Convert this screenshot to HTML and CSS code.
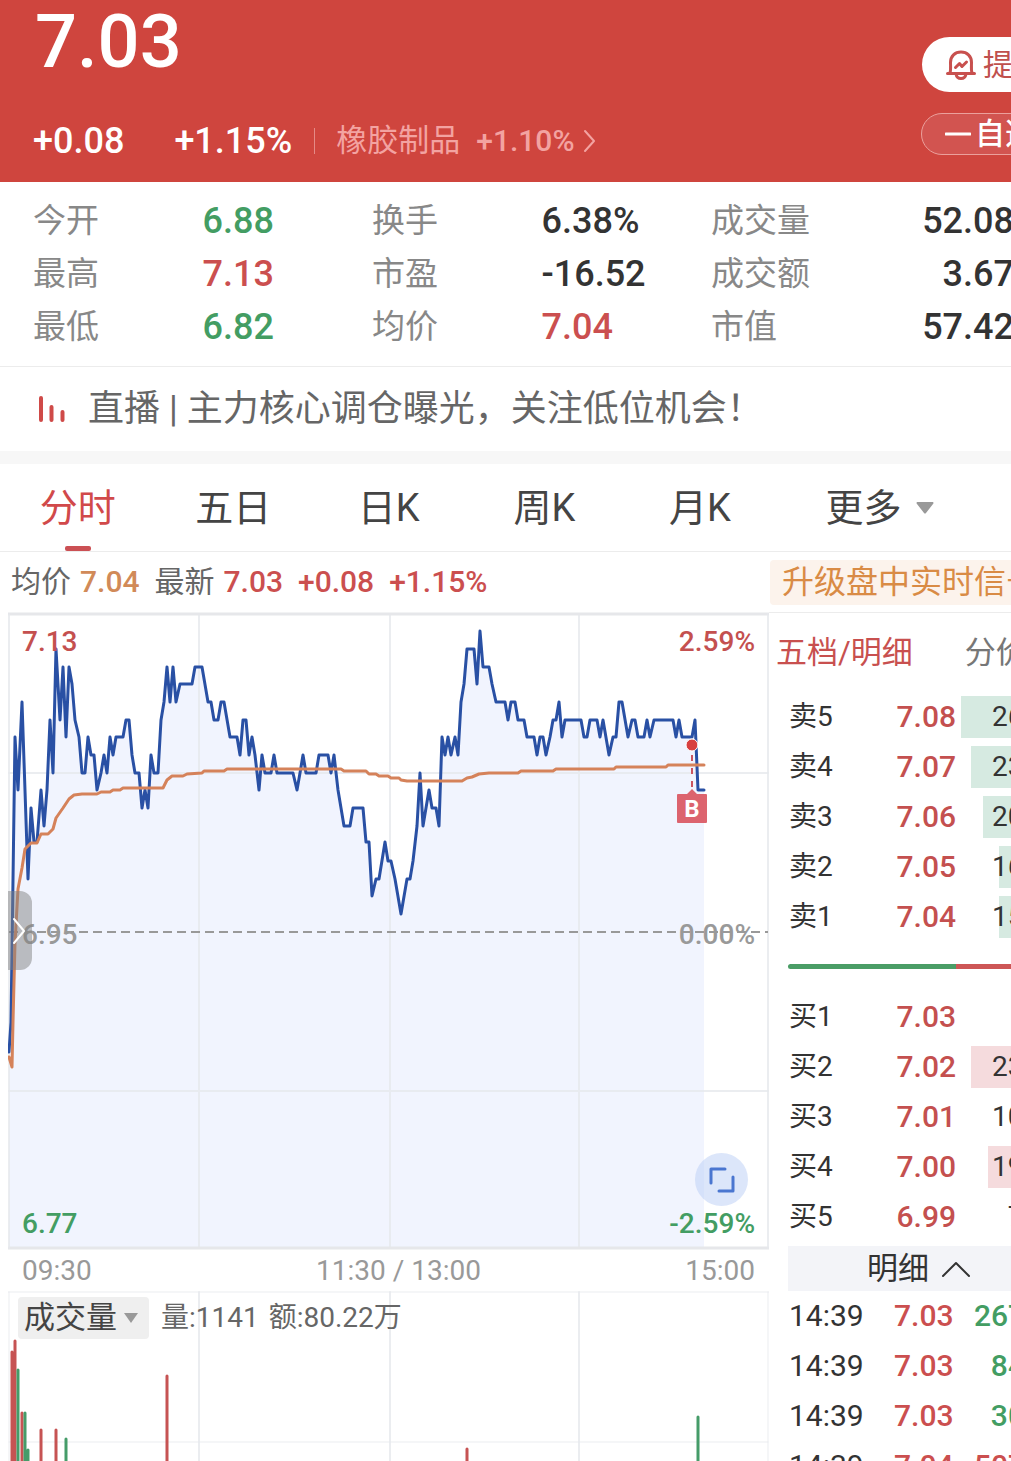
FILE: index.html
```html
<!DOCTYPE html>
<html lang="zh-CN">

<head>
	<title>分时行情</title>
	<meta charset="utf-8">
	<meta name="viewport" content="width=device-width, initial-scale=1">
	<link rel="stylesheet" href="styles.css">
</head>

<body>
<div class="page">

	<header class="quote">
		<div class="quote-main">
			<h1 class="quote-price">7.03</h1>
			<div class="quote-change">
				<span class="change-value">+0.08</span>
				<span class="change-rate">+1.15%</span>
				<a class="sector" href="#">
					<span class="sector-name">橡胶制品</span>
					<span class="sector-rate">+1.10%</span>
					<svg class="sector-arrow" width="14" height="24" viewBox="0 0 14 24"><path d="M2 2 L11 12 L2 22"/></svg>
				</a>
			</div>
		</div>
		<div class="quote-actions">
			<button class="btn-alert" type="button">
				<svg width="30" height="30" viewBox="0 0 30 30">
					<path d="M1.5 23.5 H28.5 M4 23 C5 20 4.500 16 4.500 12.500 C4.500 6 9 2 15 2 C21 2 25.500 6 25.500 12.500 C25.500 16 25 20 26 23"/>
					<path d="M10 24 C10.500 27 12.500 28.500 15 28.500 C17.500 28.500 19.500 27 20 24"/>
					<path d="M9.500 17.500 L13.500 13.500 L16 16.500 L20.500 12"/>
				</svg>提醒</button>
			<button class="btn-watch" type="button">
				<svg width="26" height="4" viewBox="0 0 26 4"><path d="M1 2 H25"/></svg>自选</button>
		</div>
	</header>

	<dl class="stats">
		<dt>今开</dt><dd class="green">6.88</dd>
		<dt>换手</dt><dd>6.38%</dd>
		<dt>成交量</dt><dd class="right">52.08万</dd>
		<dt>最高</dt><dd class="red">7.13</dd>
		<dt>市盈</dt><dd>-16.52</dd>
		<dt>成交额</dt><dd class="right">3.67亿</dd>
		<dt>最低</dt><dd class="green">6.82</dd>
		<dt>均价</dt><dd class="red">7.04</dd>
		<dt>市值</dt><dd class="right">57.42亿</dd>
	</dl>

	<a class="notice" href="#">
		<svg width="28" height="26" viewBox="0 0 28 26"><path d="M3 2 V24 M13.500 11 V24 M24.500 16 V24"/></svg>
		<span>直播 | 主力核心调仓曝光，关注低位机会！</span>
	</a>

	<nav class="tabs">
		<button class="tab active" type="button">分时</button>
		<button class="tab" type="button">五日</button>
		<button class="tab" type="button">日K</button>
		<button class="tab" type="button">周K</button>
		<button class="tab" type="button">月K</button>
		<label class="tab-more">
			<select aria-label="更多周期">
				<option>更多</option>
			</select>
			<svg width="18" height="12" viewBox="0 0 18 12"><path d="M1 0 H17 Q18 1 17 2 L10 11 Q9 12 8 11 L1 2 Q0 1 1 0 Z"/></svg>
		</label>
	</nav>

	<div class="info">
		<span>均价</span><b class="orange">7.04</b>
		<span class="latest">最新</span><b class="red">7.03</b>
		<b class="red diff">+0.08</b><b class="red diff">+1.15%</b>
		<a class="upgrade" href="#">升级盘中实时信号</a>
	</div>

	<main class="board">
		<section class="charts">
			<div class="price-chart">
				<svg class="plot" viewBox="0 0 761 638" preserveAspectRatio="none">
					<polygon class="area" points="1,440 3,410 7,125 10,178 14,90 20,267 23,196 26,230 29,230 33,178 36,214 39,178 42,108 45,161 48,37 52,108 55,55 58,125 61,55 64,72 67,108 71,125 74,161 77,161 80,125 83,143 86,143 89,178 93,161 96,143 99,161 102,125 105,143 108,125 115,125 118,108 121,108 124,143 127,161 131,161 134,196 137,178 140,196 143,143 146,161 150,161 153,108 156,90 159,55 162,90 165,55 168,90 172,72 184,72 187,55 194,55 200,90 203,90 206,108 210,108 213,90 216,90 222,125 229,125 232,143 235,108 238,108 241,143 244,125 247,143 251,178 254,143 257,161 263,161 266,143 269,161 285,161 289,178 292,161 295,143 298,161 308,161 311,143 320,143 323,161 326,143 330,178 336,214 342,214 345,196 355,196 358,230 361,230 364,284 368,267 371,267 377,230 380,249 383,249 387,267 393,302 399,267 402,267 405,249 409,214 412,161 415,214 421,178 424,196 428,196 431,214 434,125 437,143 440,125 443,143 447,125 450,143 453,90 456,72 459,37 466,37 469,72 472,19 475,55 481,55 484,72 488,90 497,90 500,108 503,90 507,90 510,108 516,108 519,125 526,125 529,143 532,125 535,125 538,143 542,125 545,108 548,108 551,90 554,125 557,108 573,108 576,125 579,125 582,108 589,108 592,125 595,108 601,143 605,125 608,125 611,90 614,90 620,125 624,108 627,108 630,125 636,125 639,108 642,125 646,108 665,108 668,125 671,108 674,125 684,125 687,108 690,178 696,178 696,636 1,636"/>
					<path class="grid-line" d="M191 2 V636 M382 2 V636 M571 2 V636 M1 161 H760 M1 479 H760"/>
					<path class="frame-line" d="M0 2 H761 M0 636 H761"/>
					<path class="grid-line" d="M1 2 V636 M760 2 V636"/>
					<path class="base-line" d="M1 320 H760"/>
					<polyline class="price-line" points="1,440 3,410 7,125 10,178 14,90 20,267 23,196 26,230 29,230 33,178 36,214 39,178 42,108 45,161 48,37 52,108 55,55 58,125 61,55 64,72 67,108 71,125 74,161 77,161 80,125 83,143 86,143 89,178 93,161 96,143 99,161 102,125 105,143 108,125 115,125 118,108 121,108 124,143 127,161 131,161 134,196 137,178 140,196 143,143 146,161 150,161 153,108 156,90 159,55 162,90 165,55 168,90 172,72 184,72 187,55 194,55 200,90 203,90 206,108 210,108 213,90 216,90 222,125 229,125 232,143 235,108 238,108 241,143 244,125 247,143 251,178 254,143 257,161 263,161 266,143 269,161 285,161 289,178 292,161 295,143 298,161 308,161 311,143 320,143 323,161 326,143 330,178 336,214 342,214 345,196 355,196 358,230 361,230 364,284 368,267 371,267 377,230 380,249 383,249 387,267 393,302 399,267 402,267 405,249 409,214 412,161 415,214 421,178 424,196 428,196 431,214 434,125 437,143 440,125 443,143 447,125 450,143 453,90 456,72 459,37 466,37 469,72 472,19 475,55 481,55 484,72 488,90 497,90 500,108 503,90 507,90 510,108 516,108 519,125 526,125 529,143 532,125 535,125 538,143 542,125 545,108 548,108 551,90 554,125 557,108 573,108 576,125 579,125 582,108 589,108 592,125 595,108 601,143 605,125 608,125 611,90 614,90 620,125 624,108 627,108 630,125 636,125 639,108 642,125 646,108 665,108 668,125 671,108 674,125 684,125 687,108 690,178 696,178"/>
					<polyline class="avg-line" points="1,445 4,455 5,410 7,331 10,277 14,256 17,237 23,231 29,231 33,222 40,222 45,217 48,206 55,196 61,187 66,183 74,182 89,182 93,180 102,180 105,178 112,178 115,176 155,176 159,168 164,164 175,164 179,162 194,161 196,159 216,159 219,157 333,157 336,159 358,159 361,162 368,162 371,164 380,164 383,166 391,166 393,168 399,169 454,169 459,166 464,165 471,162 481,161 510,161 513,159 545,159 548,157 606,157 608,155 658,155 660,153 696,153"/>
					<!-- buy marker -->
					<path class="mark-line" d="M684 143 V180"/>
					<circle class="mark-dot" cx="684" cy="133" r="6"/>
					<path class="mark-box" d="M670 182 H679 L684 177 L689 182 H698 Q699 182 699 183 V210 Q699 211 698 211 H670 Q669 211 669 210 V183 Q669 182 670 182 Z"/>
					<text class="mark-text" x="684" y="205">B</text>
				</svg>
				<span class="label top left red">7.13</span>
				<span class="label top right red">2.59%</span>
				<span class="label middle left">6.95</span>
				<span class="label middle right">0.00%</span>
				<span class="label bottom left green">6.77</span>
				<span class="label bottom right green">-2.59%</span>
				<button class="drawer" type="button" aria-label="展开">
					<svg width="14" height="28" viewBox="0 0 14 28"><path d="M2 2 L12 14 L2 26"/></svg>
				</button>
				<button class="expand" type="button" aria-label="全屏">
					<svg width="26" height="26" viewBox="0 0 26 26"><path d="M2 16 V2 H16 M24 10 V24 H10"/></svg>
				</button>
			</div>

			<div class="times">
				<span>09:30</span>
				<span class="midday">11:30 / 13:00</span>
				<span>15:00</span>
			</div>

			<div class="volume-chart">
				<svg class="plot" viewBox="0 0 761 200" preserveAspectRatio="none">
					<path class="grid-line thin" d="M0 1 H761 M1 151 H760"/>
					<path class="grid-line" d="M191 1 V200 M382 1 V200 M571 1 V200"/>
					<path class="grid-line thin" d="M1 1 V200 M760 1 V200"/>
					<path class="vol-up" d="M4 61 V200 M7 50 V200 M14 122 V200 M33 139 V200 M48 139 V200 M159 85 V200 M459 158 V200"/>
					<path class="vol-down" d="M10 79 V200 M17 122 V200 M20 159 V200 M58 148 V200 M690 126 V200"/>
				</svg>
				<div class="volume-head">
					<label class="indicator">
						<select aria-label="指标">
							<option>成交量</option>
						</select>
						<svg width="14" height="10" viewBox="0 0 14 10"><path d="M0 0 H14 L7 10 Z"/></svg>
					</label>
					<span>量:1141</span>
					<span>额:80.22万</span>
				</div>
			</div>
		</section>

		<aside class="side">
			<div class="side-tabs">
				<button class="side-tab active" type="button">五档/明细</button>
				<button class="side-tab" type="button">分价</button>
			</div>

			<table class="book sell">
				<tr><th>卖5</th><td>7.08</td><td class="qty" style="background-size: 119px 42px">2614</td></tr>
				<tr><th>卖4</th><td>7.07</td><td class="qty" style="background-size: 109px 42px">2352</td></tr>
				<tr><th>卖3</th><td>7.06</td><td class="qty" style="background-size: 97px 42px">2063</td></tr>
				<tr><th>卖2</th><td>7.05</td><td class="qty" style="background-size: 81px 42px">1620</td></tr>
				<tr><th>卖1</th><td>7.04</td><td class="qty" style="background-size: 81px 42px">1583</td></tr>
			</table>

			<div class="ratio"><i class="ratio-sell"></i><i class="ratio-buy"></i></div>

			<table class="book buy">
				<tr><th>买1</th><td>7.03</td><td class="qty" style="background-size: 0 42px">62</td></tr>
				<tr><th>买2</th><td>7.02</td><td class="qty" style="background-size: 109px 42px">2318</td></tr>
				<tr><th>买3</th><td>7.01</td><td class="qty" style="background-size: 0 42px">1025</td></tr>
				<tr><th>买4</th><td>7.00</td><td class="qty" style="background-size: 92px 42px">1934</td></tr>
				<tr><th>买5</th><td>6.99</td><td class="qty" style="background-size: 0 42px">710</td></tr>
			</table>

			<button class="detail" type="button">明细
				<svg width="30" height="18" viewBox="0 0 30 18"><path d="M2 16 L15 3 L28 16"/></svg>
			</button>

			<table class="trades">
				<tr><td class="time">14:39</td><td class="red">7.03</td><td class="amount green">2671</td></tr>
				<tr><td class="time">14:39</td><td class="red">7.03</td><td class="amount green">840</td></tr>
				<tr><td class="time">14:39</td><td class="red">7.03</td><td class="amount green">305</td></tr>
				<tr><td class="time">14:39</td><td class="red">7.04</td><td class="amount red">5071</td></tr>
			</table>
		</aside>
	</main>

</div>
</body>
</html>
```

FILE: styles.css
```css
* {
    box-sizing: border-box;
}

body {
    margin: 0;
    height: 100vh;
    overflow: hidden;
    background-color: #fff;
    color: #333;
    font-family: Roboto, "Noto Sans CJK SC", sans-serif;
    font-size: 28px;
    line-height: 40px;
}

button,
select {
    margin: 0;
    padding: 0;
    border: none;
    background: none;
    color: inherit;
    font: inherit;
    cursor: pointer;
}

select {
    appearance: none;
}

a {
    color: inherit;
    text-decoration: none;
}

svg {
    display: block;
    flex: none;
    fill: none;
    stroke-linecap: round;
    stroke-linejoin: round;
}

.page {
    min-width: 1080px;
}

.red {
    color: #cb4f4f;
}

.green {
    color: #439d63;
}

.orange {
    color: #d18a58;
}

/* header */
.quote {
    display: flex;
    justify-content: space-between;
    height: 182px;
    padding-left: 33px;
    background-color: #cf453e;
    color: #fff;
}

.quote-price {
    margin: 0;
    padding-left: 2px;
    font-size: 74px;
    font-weight: 500;
    line-height: 84px;
}

.quote-change {
    display: flex;
    align-items: center;
    height: 40px;
    margin-top: 37px;
    font-size: 36px;
    font-weight: 500;
}

.change-rate {
    margin-left: 50px;
}

.sector {
    display: flex;
    align-items: center;
    margin-left: 22px;
    color: #f3a3a1;
    font-size: 30px;
    font-weight: 400;
}

.sector::before {
    content: "";
    width: 1px;
    height: 26px;
    margin-right: 21px;
    background-color: #e58a86;
}

.sector-name {
    margin-right: 16px;
    font-size: 31px;
}

.sector-rate {
    font-weight: 500;
}

.sector-arrow {
    margin-left: 8px;
    stroke: #f3a3a1;
    stroke-width: 2;
}

.quote-actions {
    display: flex;
    flex-direction: column;
    gap: 21px;
    width: 159px;
    padding-top: 37px;
}

.btn-alert,
.btn-watch {
    display: flex;
    align-items: center;
    border-radius: 28px 0 0 28px;
    font-size: 30px;
}

.btn-alert {
    gap: 7px;
    height: 55px;
    margin-left: 1px;
    padding-left: 24px;
    background-color: #fff;
    color: #c0504d;
}

.btn-alert svg {
    stroke: #c8504e;
    stroke-width: 3;
}

.btn-watch {
    gap: 4px;
    height: 42px;
    padding-left: 23px;
    border: 1px solid #eba09c;
    background-color: #d25450;
    font-weight: 500;
}

.btn-watch svg {
    stroke: #fff;
    stroke-width: 3;
}

/* key figures */
.stats {
    display: grid;
    grid-template-columns: repeat(6, 1fr);
    grid-auto-rows: 53px;
    align-items: center;
    height: 185px;
    margin: 0;
    padding: 12px 30px 12px 33px;
    border-bottom: 1px solid #ececec;
    font-size: 36px;
    font-weight: 500;
}

.stats dt {
    color: #888;
    font-size: 33px;
    font-weight: 400;
}

.stats dd {
    margin: 0;
}

.stats .right {
    text-align: right;
}

.notice {
    display: flex;
    align-items: center;
    gap: 22px;
    height: 97px;
    padding-left: 38px;
    border-bottom: 13px solid #f7f7f7;
    color: #666;
    font-size: 36px;
}

.notice svg {
    stroke: #cf4a48;
    stroke-width: 4;
}

/* period tabs */
.tabs {
    display: flex;
    height: 88px;
    border-bottom: 1px solid #ececec;
    color: #444;
    font-size: 38px;
}

.tab {
    position: relative;
    width: 14.4%;
}

.tab.active {
    color: #d1494a;
}

.tab.active::after {
    content: "";
    position: absolute;
    bottom: 0;
    left: 50%;
    width: 26px;
    height: 5px;
    margin-left: -13px;
    border-radius: 2px;
    background-color: #cb5054;
}

.tab-more {
    display: flex;
    align-items: center;
    gap: 13px;
    padding-left: 48px;
}

.tab-more svg,
.indicator svg {
    fill: #999;
}

.info {
    display: flex;
    align-items: center;
    height: 60px;
    padding-left: 11px;
    color: #666;
    font-size: 30px;
}

.info b {
    margin-left: 9px;
    font-weight: 500;
}

.info .latest,
.info .diff {
    margin-left: 15px;
}

.info .upgrade {
    width: 310px;
    height: 45px;
    margin-left: auto;
    padding-left: 12px;
    border-radius: 4px 0 0 4px;
    background-color: #fcf3ec;
    color: #d98b45;
    font-size: 32px;
    line-height: 44px;
}

/* charts */
.board {
    display: flex;
}

.charts {
    flex: 1;
    padding-left: 8px;
}

.price-chart,
.volume-chart {
    position: relative;
    height: 638px;
}

.plot {
    width: 100%;
    height: 100%;
}

.grid-line {
    stroke: #e6e8ec;
    stroke-width: 2;
    stroke-opacity: 0.8;
}

.grid-line.thin {
    stroke-width: 1;
}

.frame-line {
    stroke: #e6e7ea;
    stroke-width: 3;
}

.base-line {
    stroke: #999;
    stroke-width: 2;
    stroke-dasharray: 9 5;
    stroke-linecap: butt;
}

.area {
    fill: #f1f4fe;
}

.price-line {
    stroke: #2950a4;
    stroke-width: 3;
}

.avg-line {
    stroke: #d5825a;
    stroke-width: 3;
}

.mark-line {
    stroke: #cb5560;
    stroke-width: 2;
    stroke-dasharray: 6 7;
    stroke-linecap: butt;
}

.mark-dot {
    fill: #d8403f;
    stroke: #fff;
    stroke-width: 1;
}

.mark-box {
    fill: #d84f5a;
    fill-opacity: 0.88;
}

.mark-text {
    fill: #fff;
    font-size: 24px;
    font-weight: 700;
    text-anchor: middle;
}

.label {
    position: absolute;
    color: #999;
    font-weight: 500;
}

.label.red {
    color: #c4504f;
}

.label.green {
    color: #439d63;
}

.label.left {
    left: 14px;
}

.label.right {
    right: 14px;
}

.label.top {
    top: 10px;
}

.label.middle {
    top: 303px;
}

.label.bottom {
    bottom: 6px;
}

.drawer {
    display: flex;
    align-items: center;
    position: absolute;
    top: 279px;
    left: 0;
    width: 24px;
    height: 79px;
    padding-left: 4px;
    border-radius: 0 12px 12px 0;
    background-color: rgba(130, 130, 130, 0.5);
}

.drawer svg {
    stroke: #fff;
    stroke-width: 2;
}

.expand {
    display: flex;
    align-items: center;
    justify-content: center;
    position: absolute;
    right: 21px;
    bottom: 44px;
    width: 53px;
    height: 53px;
    border-radius: 50%;
    background-color: rgba(186, 205, 245, 0.5);
}

.expand svg {
    stroke: #4a76d0;
    stroke-width: 3;
}

.times {
    display: flex;
    align-items: center;
    justify-content: space-between;
    height: 41px;
    padding: 0 14px;
    color: #999;
}

.times .midday {
    margin-left: 20px;
}

.volume-chart {
    height: 200px;
}

.volume-head {
    display: flex;
    align-items: center;
    gap: 10px;
    position: absolute;
    top: 6px;
    left: 10px;
    color: #666;
}

.indicator {
    display: flex;
    align-items: center;
    gap: 7px;
    height: 42px;
    margin-right: 2px;
    padding: 0 11px 0 6px;
    border-radius: 4px;
    background-color: #efefef;
    color: #444;
    font-size: 31px;
}

/* order book */
.side {
    width: 311px;
    border-top: 1px solid #ececec;
}

.side-tabs {
    display: flex;
    gap: 52px;
    height: 79px;
    padding-left: 7px;
    font-size: 31px;
}

.side-tab {
    color: #777;
}

.side-tab.active {
    color: #c8504f;
}

.book,
.trades {
    width: 291px;
    margin-left: 20px;
    border-collapse: collapse;
    table-layout: fixed;
}

.book th,
.book td,
.trades td {
    height: 50px;
    padding: 0;
    text-align: left;
}

.book th {
    width: 80px;
    font-weight: 400;
}

.book td {
    width: 87px;
    color: #c4504f;
    font-size: 30px;
    font-weight: 500;
    text-align: right;
}

.book .qty {
    width: auto;
    padding-right: 25px;
    background-repeat: no-repeat;
    background-position: right center;
    color: #333;
    font-size: 28px;
    font-weight: 400;
}

.sell .qty {
    background-image: linear-gradient(#d6eae1, #d6eae1);
}

.buy .qty {
    background-image: linear-gradient(#f5dbdd, #f5dbdd);
}

.ratio {
    display: flex;
    height: 5px;
    margin: 22px 0 23px 19px;
}

.ratio-sell {
    width: 168px;
    border-radius: 3px 0 0 3px;
    background-color: #4a9d66;
}

.ratio-buy {
    flex: 1;
    background-color: #cd5656;
}

.detail {
    display: flex;
    align-items: center;
    gap: 12px;
    width: 292px;
    height: 45px;
    margin: 4px 0 0 19px;
    padding-left: 79px;
    background-color: #f3f4f8;
    font-size: 31px;
}

.detail svg {
    stroke: #333;
    stroke-width: 2;
}

.trades td {
    width: 80px;
    font-size: 30px;
    font-weight: 500;
}

.trades .time {
    width: 105px;
    font-weight: 400;
}

.trades .amount {
    width: auto;
    padding-right: 38px;
    text-align: right;
}

.vol-up {
    stroke: #c65353;
    stroke-width: 3;
}

.vol-down {
    stroke: #459c69;
    stroke-width: 3;
}
```
